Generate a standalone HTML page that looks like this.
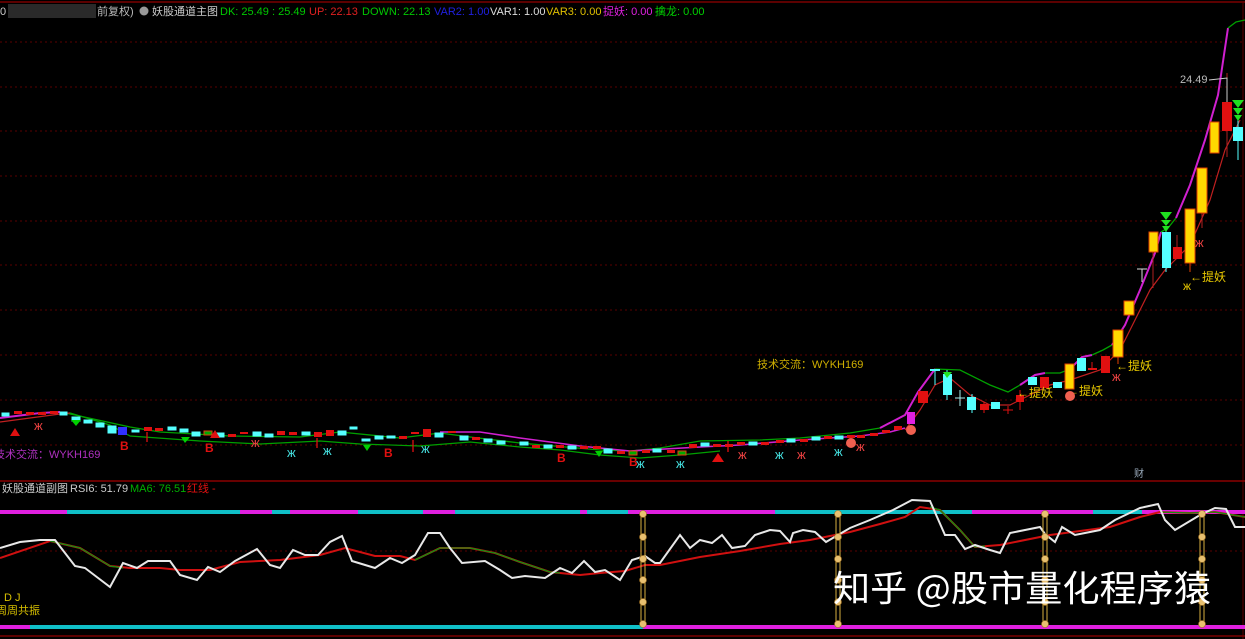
<!DOCTYPE html>
<html><head><meta charset="utf-8"><style>
html,body{margin:0;padding:0;background:#000;width:1245px;height:639px;overflow:hidden}
svg{display:block}
text{font-family:"Liberation Sans","Noto Sans CJK SC",sans-serif}
</style></head><body>
<svg width="1245" height="639" viewBox="0 0 1245 639" xmlns="http://www.w3.org/2000/svg">
<rect width="1245" height="639" fill="#000"/>
<line x1="0" y1="2" x2="1245" y2="2" stroke="#7a0000" stroke-width="1.5"/>
<line x1="1243" y1="2" x2="1243" y2="639" stroke="#5a0000"/>
<line x1="0" y1="481" x2="1245" y2="481" stroke="#8a0000" stroke-width="1.5"/>
<line x1="0" y1="636" x2="1245" y2="636" stroke="#7a0000" stroke-width="1.5"/>
<g stroke="#5a0000" stroke-dasharray="2,3">
<line x1="0" y1="42" x2="1243" y2="42"/><line x1="0" y1="87" x2="1243" y2="87"/>
<line x1="0" y1="131" x2="1243" y2="131"/><line x1="0" y1="176" x2="1243" y2="176"/>
<line x1="0" y1="221" x2="1243" y2="221"/><line x1="0" y1="265" x2="1243" y2="265"/>
<line x1="0" y1="310" x2="1243" y2="310"/><line x1="0" y1="355" x2="1243" y2="355"/>
<line x1="0" y1="400" x2="1243" y2="400"/><line x1="0" y1="445" x2="1243" y2="445"/>
<line x1="0" y1="551" x2="1243" y2="551"/>
</g>
<text x="0" y="15" font-size="11" fill="#ccc">0</text>
<rect x="8" y="4" width="88" height="14" fill="#2a2a2a"/>
<text x="97" y="15" font-size="11" fill="#bbb">前复权)</text>
<circle cx="144" cy="11" r="4.5" fill="#999"/>
<text x="152" y="15" font-size="11" fill="#ccc">妖股通道主图</text>
<text x="220" y="15" font-size="11" fill="#00c800">DK: 25.49 : 25.49</text>
<text x="309" y="15" font-size="11" fill="#e02020">UP: 22.13</text>
<text x="362" y="15" font-size="11" fill="#00c800">DOWN: 22.13</text>
<text x="434" y="15" font-size="11" fill="#2020e0">VAR2: 1.00</text>
<text x="490" y="15" font-size="11" fill="#ddd">VAR1: 1.00</text>
<text x="546" y="15" font-size="11" fill="#e0c000">VAR3: 0.00</text>
<text x="603" y="15" font-size="11" fill="#e020e0">捉妖: 0.00</text>
<text x="655" y="15" font-size="11" fill="#00d000">擒龙: 0.00</text>

<polyline fill="none" stroke="#00a000" stroke-width="1.3" points="60,412 75,415 130,427 160,432 230,436 300,437 340,432 400,438 440,433 470,437 520,443 600,450 630,451 660,448 700,441 760,440 800,438 850,433 880,428"/>
<polyline fill="none" stroke="#d020d0" stroke-width="2" points="0,418 40,413 60,412"/>
<polyline fill="none" stroke="#d020d0" stroke-width="2" points="880,428 905,415 918,392 935,369"/>
<polyline fill="none" stroke="#00a000" stroke-width="1.3" points="935,369 960,370 990,385 1008,392 1020,385"/>
<polyline fill="none" stroke="#d020d0" stroke-width="2" points="1020,385 1035,375 1045,373"/>
<polyline fill="none" stroke="#00a000" stroke-width="1.3" points="1045,373 1060,373 1070,369"/>
<polyline fill="none" stroke="#d020d0" stroke-width="2" points="1070,369 1082,357 1092,355"/>
<polyline fill="none" stroke="#00a000" stroke-width="1.3" points="1092,355 1103,350 1112,345"/>
<polyline fill="none" stroke="#d020d0" stroke-width="2" points="1112,345 1125,325 1140,290 1155,253 1161,232"/>
<polyline fill="none" stroke="#00a000" stroke-width="1.3" points="1161,232 1168,228 1176,218"/>
<polyline fill="none" stroke="#d020d0" stroke-width="2" points="1176,218 1190,185 1205,140 1218,95 1228,28"/>
<polyline fill="none" stroke="#00a000" stroke-width="1.3" points="1228,28 1236,22 1245,20"/>
<polyline fill="none" stroke="#00a000" stroke-width="1.2" points="70,413 110,425 130,436 200,441 260,444 320,441 360,444 420,446 470,442 520,447 560,450 600,455 640,458 680,455 720,451"/>
<polyline fill="none" stroke="#c02020" stroke-width="1.2" points="0,422 30,418 60,414 70,413"/>
<polyline fill="none" stroke="#d020d0" stroke-width="1.6" points="440,432 480,432 520,438 580,446 630,451 700,447 740,445 800,440 860,436 890,432 905,428"/>
<polyline fill="none" stroke="#c02020" stroke-width="1.2" points="905,430 920,410 935,385 950,378 970,395 990,405 1010,405 1030,395 1050,385 1070,380 1100,370 1120,350 1135,320 1150,290 1165,270 1190,245 1210,200 1225,150 1240,120"/>

<g stroke-width="1">
<g fill="#5ff" stroke="#5ff">
<rect x="2" y="413" width="7" height="3"/><rect x="60" y="412" width="7" height="3"/><rect x="72" y="417" width="8" height="4"/>
<rect x="84" y="420" width="8" height="3"/><rect x="96" y="423" width="8" height="4"/><rect x="108" y="426" width="8" height="7"/>
<rect x="132" y="430" width="7" height="2"/><rect x="168" y="427" width="8" height="3"/><rect x="180" y="429" width="8" height="3"/>
<rect x="192" y="432" width="8" height="4"/><rect x="216" y="433" width="8" height="4"/><rect x="253" y="432" width="8" height="4"/>
<rect x="265" y="434" width="8" height="3"/><rect x="302" y="432" width="8" height="3"/><rect x="338" y="431" width="8" height="4"/>
<rect x="350" y="427" width="7" height="2"/><rect x="362" y="439" width="8" height="2"/><rect x="375" y="436" width="8" height="3"/>
<rect x="387" y="436" width="8" height="2"/><rect x="435" y="433" width="8" height="4"/><rect x="460" y="436" width="8" height="4"/>
<rect x="484" y="439" width="8" height="3"/><rect x="497" y="441" width="8" height="3"/><rect x="520" y="442" width="8" height="3"/>
<rect x="544" y="445" width="8" height="3"/><rect x="568" y="446" width="8" height="3"/><rect x="604" y="449" width="8" height="4"/>
<rect x="653" y="449" width="8" height="3"/><rect x="701" y="443" width="8" height="3"/><rect x="749" y="442" width="8" height="3"/>
<rect x="787" y="439" width="8" height="3"/><rect x="812" y="437" width="8" height="3"/><rect x="835" y="436" width="8" height="3"/>
</g>
<g fill="#e01010">
<rect x="14" y="411" width="8" height="3"/><rect x="26" y="412" width="8" height="3"/><rect x="38" y="412" width="8" height="3"/><rect x="50" y="411" width="8" height="3"/>
<rect x="144" y="427" width="8" height="4"/><rect x="155" y="428" width="8" height="3"/><rect x="228" y="434" width="8" height="3"/>
<rect x="240" y="432" width="8" height="2"/><rect x="277" y="431" width="8" height="4"/><rect x="289" y="432" width="8" height="3"/>
<rect x="314" y="432" width="8" height="5"/><rect x="326" y="430" width="8" height="6"/><rect x="399" y="436" width="8" height="3"/>
<rect x="411" y="432" width="8" height="2"/><rect x="423" y="429" width="8" height="8"/><rect x="448" y="431" width="8" height="2"/>
<rect x="472" y="437" width="8" height="3"/><rect x="532" y="445" width="8" height="3"/><rect x="556" y="445" width="8" height="3"/>
<rect x="580" y="446" width="8" height="3"/><rect x="593" y="446" width="8" height="3"/><rect x="617" y="451" width="8" height="3"/>
<rect x="642" y="450" width="8" height="3"/><rect x="667" y="450" width="8" height="3"/><rect x="689" y="444" width="8" height="4"/>
<rect x="713" y="444" width="8" height="3"/><rect x="725" y="444" width="8" height="3"/><rect x="737" y="442" width="8" height="3"/>
<rect x="761" y="442" width="8" height="3"/><rect x="776" y="440" width="8" height="3"/><rect x="800" y="439" width="8" height="3"/>
<rect x="824" y="436" width="8" height="3"/><rect x="847" y="435" width="8" height="3"/><rect x="857" y="435" width="8" height="3"/>
<rect x="870" y="433" width="8" height="3"/><rect x="882" y="430" width="8" height="3"/><rect x="894" y="426" width="8" height="4"/>
</g>
<g fill="#0a0" stroke="#e04010"><rect x="204" y="431" width="8" height="4"/><rect x="629" y="451" width="8" height="4"/><rect x="678" y="451" width="8" height="4"/></g>
<rect x="118" y="427" width="9" height="8" fill="#3030ff"/>
</g>
<g fill="#e01010" font-size="12" font-weight="bold">
<polygon points="10,436 20,436 15,428"/><polygon points="210,438 220,438 215,430"/>
<text x="120" y="450">B</text><text x="205" y="452">B</text><text x="384" y="457">B</text>
<text x="557" y="462">B</text><text x="629" y="466">B</text>
<polygon points="712,462 724,462 718,453"/>
</g>
<g fill="#00d000"><polygon points="71,420 81,420 76,426"/><polygon points="181,437 190,437 185,443"/><polygon points="595,451 603,451 599,457"/><polygon points="363,445 371,445 367,451"/></g>
<g font-size="13" fill="#4dd">
<text x="287" y="457">ж</text><text x="323" y="455">ж</text><text x="421" y="453">ж</text><text x="636" y="468">ж</text>
<text x="676" y="468">ж</text><text x="775" y="459">ж</text><text x="834" y="456">ж</text></g>
<g font-size="13" fill="#e84040">
<text x="34" y="430">ж</text><text x="251" y="447">ж</text><text x="738" y="459">ж</text><text x="797" y="459">ж</text><text x="856" y="451">ж</text><text x="1112" y="381">ж</text><text x="1195" y="247">ж</text></g>
<g stroke="#e01010" stroke-width="1.3"><line x1="147" y1="432" x2="147" y2="442"/><line x1="317" y1="438" x2="317" y2="448"/><line x1="413" y1="440" x2="413" y2="452"/><line x1="728" y1="441" x2="728" y2="452"/></g>
<circle cx="851" cy="443" r="5" fill="#f06050"/>
<text x="-6" y="458" font-size="11" fill="#b030c0">技术交流：WYKH169</text>
<text x="757" y="368" font-size="11" fill="#d0b000">技术交流：WYKH169</text>
<text x="1134" y="477" font-size="10" fill="#9ab">财</text>

<g>
<rect x="907" y="412" width="8" height="12" fill="#e020e0"/>
<rect x="918" y="391" width="10" height="12" fill="#e01010"/>
<line x1="930" y1="370" x2="940" y2="370" stroke="#5ff" stroke-width="2"/><line x1="935" y1="370" x2="935" y2="385" stroke="#5ff"/>
<line x1="947" y1="370" x2="947" y2="400" stroke="#5ff"/><rect x="943" y="374" width="9" height="21" fill="#5ff"/>
<line x1="955" y1="398" x2="965" y2="398" stroke="#aee"/><line x1="960" y1="390" x2="960" y2="406" stroke="#aee"/>
<line x1="972" y1="394" x2="972" y2="413" stroke="#5ff"/><rect x="967" y="397" width="9" height="13" fill="#5ff"/>
<rect x="980" y="404" width="9" height="6" fill="#e01010"/><line x1="984" y1="402" x2="984" y2="413" stroke="#e01010"/>
<rect x="991" y="402" width="9" height="7" fill="#5ff"/>
<line x1="1003" y1="410" x2="1013" y2="410" stroke="#e01010"/><line x1="1008" y1="406" x2="1008" y2="414" stroke="#e01010"/>
<rect x="1016" y="395" width="8" height="7" fill="#e01010"/><line x1="1020" y1="390" x2="1020" y2="410" stroke="#e01010"/>
<rect x="1028" y="377" width="9" height="8" fill="#5ff"/>
<rect x="1040" y="377" width="9" height="11" fill="#e01010"/>
<rect x="1053" y="382" width="9" height="6" fill="#5ff"/>
<rect x="1065" y="364" width="9" height="25" fill="#ffd800" stroke="#e04000"/>
<rect x="1077" y="358" width="9" height="13" fill="#5ff"/>
<line x1="1088" y1="369" x2="1097" y2="369" stroke="#e01010" stroke-width="2"/><line x1="1092" y1="362" x2="1092" y2="369" stroke="#e01010"/>
<rect x="1101" y="356" width="9" height="17" fill="#e01010"/>
<line x1="1118" y1="357" x2="1118" y2="364" stroke="#e04000"/><rect x="1113" y="330" width="10" height="27" fill="#ffd800" stroke="#e04000"/>
<rect x="1124" y="301" width="10" height="14" fill="#ffd800" stroke="#e04000"/>
<line x1="1137" y1="269" x2="1147" y2="269" stroke="#ddd"/><line x1="1142" y1="269" x2="1142" y2="282" stroke="#ddd"/>
<line x1="1153" y1="250" x2="1153" y2="288" stroke="#b02020"/><rect x="1149" y="232" width="9" height="20" fill="#ffd800" stroke="#e04000"/>
<line x1="1166" y1="228" x2="1166" y2="272" stroke="#5ff"/><rect x="1162" y="232" width="9" height="36" fill="#5ff"/>
<line x1="1177" y1="235" x2="1177" y2="247" stroke="#b02020"/><rect x="1173" y="247" width="9" height="12" fill="#e01010"/>
<line x1="1190" y1="262" x2="1190" y2="272" stroke="#e04000"/><rect x="1185" y="209" width="10" height="54" fill="#ffd800" stroke="#e04000"/>
<line x1="1202" y1="213" x2="1202" y2="228" stroke="#b02020"/><rect x="1197" y="168" width="10" height="45" fill="#ffd800" stroke="#e04000"/>
<rect x="1210" y="122" width="9" height="31" fill="#ffd800" stroke="#e04000"/>
<line x1="1227" y1="73" x2="1227" y2="157" stroke="#b02020"/><rect x="1222" y="102" width="10" height="29" fill="#e01010"/>
<line x1="1238" y1="120" x2="1238" y2="160" stroke="#5ff"/><rect x="1233" y="127" width="10" height="14" fill="#5ff"/>
<polygon points="1232,100 1244,100 1238,108" fill="#20e020"/><polygon points="1233,108 1243,108 1238,115" fill="#20e020"/><polygon points="1234,115 1242,115 1238,121" fill="#20e020"/>
<polygon points="1160,212 1172,212 1166,220" fill="#20e020"/><polygon points="1161,220 1171,220 1166,226" fill="#20e020"/><polygon points="1162,226 1170,226 1166,232" fill="#20e020"/>
<polygon points="943,372 952,372 947,378" fill="#20e020"/>
</g>
<text x="1180" y="83" font-size="11" fill="#bbb">24.49</text>
<polyline points="1209,80 1227,78 1227,102" fill="none" stroke="#ccc" stroke-width="1"/>
<g font-size="12" fill="#e8c800">
<text x="1017" y="397">←提妖</text><text x="1067" y="395">←提妖</text><text x="1116" y="370">←提妖</text><text x="1190" y="281">←提妖</text>
<text x="1183" y="290">ж</text></g>
<circle cx="1070" cy="396" r="5" fill="#f06050"/><circle cx="911" cy="430" r="5" fill="#f06050"/>

<text x="2" y="492" font-size="11" fill="#ccc">妖股通道副图</text>
<text x="70" y="492" font-size="11" fill="#ccc">RSI6: 51.79</text>
<text x="130" y="492" font-size="11" fill="#00b000">MA6: 76.51</text>
<text x="187" y="492" font-size="11" fill="#e01010">红线 -</text>
<g stroke-width="4">
<line x1="0" y1="512" x2="67" y2="512" stroke="#e020e0"/><line x1="67" y1="512" x2="240" y2="512" stroke="#10c0c8"/>
<line x1="240" y1="512" x2="272" y2="512" stroke="#e020e0"/><line x1="272" y1="512" x2="290" y2="512" stroke="#10c0c8"/>
<line x1="290" y1="512" x2="358" y2="512" stroke="#e020e0"/><line x1="358" y1="512" x2="423" y2="512" stroke="#10c0c8"/>
<line x1="423" y1="512" x2="455" y2="512" stroke="#e020e0"/><line x1="455" y1="512" x2="580" y2="512" stroke="#10c0c8"/>
<line x1="580" y1="512" x2="587" y2="512" stroke="#e020e0"/><line x1="587" y1="512" x2="628" y2="512" stroke="#10c0c8"/>
<line x1="628" y1="512" x2="775" y2="512" stroke="#e020e0"/><line x1="775" y1="512" x2="972" y2="512" stroke="#10c0c8"/>
<line x1="972" y1="512" x2="1093" y2="512" stroke="#e020e0"/><line x1="1093" y1="512" x2="1142" y2="512" stroke="#10c0c8"/>
<line x1="1142" y1="512" x2="1245" y2="512" stroke="#e020e0"/>
<line x1="0" y1="627" x2="30" y2="627" stroke="#e020e0"/><line x1="30" y1="627" x2="643" y2="627" stroke="#10c0c8"/>
<line x1="643" y1="627" x2="1245" y2="627" stroke="#e020e0"/>
</g>
<polyline fill="none" stroke="#d01010" stroke-width="2" points="0,558 50,541 80,548 110,566 130,568 160,568 180,570 210,570 240,562 280,560 320,555 345,548 375,556 400,556 415,560 440,548 470,548 495,553 520,562 550,572 580,575 600,573 625,571 645,565 660,565 700,557 740,551 780,544 810,540 850,532 880,524 905,517 920,507 940,510 960,530 975,547 1000,545 1050,535 1080,531 1110,527 1140,517 1160,512 1190,513 1215,512 1245,517"/>
<g fill="none" stroke="#109010" stroke-width="1.3">
<polyline points="50,541 80,548 110,566 123,568"/><polyline points="415,560 440,548 470,548 495,553 520,562 550,572 560,573"/>
<polyline points="930,507 940,510 960,530 975,547 985,546"/><polyline points="1160,512 1190,513 1215,512 1245,517"/></g>
<polyline fill="none" stroke="#e8e8e8" stroke-width="2" points="0,548 20,542 40,540 55,540 75,566 85,568 110,587 123,563 137,568 148,561 170,561 180,575 197,580 208,567 220,572 235,561 257,549 270,565 280,568 293,550 305,555 318,555 330,542 342,536 352,561 375,568 390,558 402,563 415,555 428,533 440,533 450,548 462,563 485,561 500,570 512,578 525,576 545,578 560,568 572,573 584,561 595,572 605,570 620,580 632,560 645,556 655,563 660,563 680,535 690,548 700,540 712,543 722,535 732,548 745,546 755,535 770,530 780,531 790,542 793,533 803,530 815,532 826,542 838,535 850,528 870,520 893,510 912,500 930,501 945,535 955,535 965,549 975,545 990,550 1000,553 1010,533 1025,530 1040,527 1045,534 1055,542 1062,527 1075,535 1085,533 1100,530 1115,520 1140,508 1158,504 1165,520 1175,530 1200,515 1215,508 1226,509 1235,527 1245,527"/>
<g stroke="#d8b040" stroke-width="1">
<line x1="641" y1="512" x2="641" y2="627"/><line x1="645" y1="512" x2="645" y2="627"/>
<line x1="836" y1="512" x2="836" y2="627"/><line x1="840" y1="512" x2="840" y2="627"/>
<line x1="1043" y1="512" x2="1043" y2="627"/><line x1="1047" y1="512" x2="1047" y2="627"/>
<line x1="1200" y1="512" x2="1200" y2="627"/><line x1="1204" y1="512" x2="1204" y2="627"/>
</g>
<g fill="#e8c070" stroke="#a07020" stroke-width="0.6">
<circle cx="643" cy="514" r="3.5"/><circle cx="643" cy="537" r="3.5"/><circle cx="643" cy="559" r="3.5"/><circle cx="643" cy="580" r="3.5"/><circle cx="643" cy="602" r="3.5"/><circle cx="643" cy="624" r="3.5"/>
<circle cx="838" cy="514" r="3.5"/><circle cx="838" cy="537" r="3.5"/><circle cx="838" cy="559" r="3.5"/><circle cx="838" cy="580" r="3.5"/><circle cx="838" cy="602" r="3.5"/><circle cx="838" cy="624" r="3.5"/>
<circle cx="1045" cy="514" r="3.5"/><circle cx="1045" cy="537" r="3.5"/><circle cx="1045" cy="559" r="3.5"/><circle cx="1045" cy="580" r="3.5"/><circle cx="1045" cy="602" r="3.5"/><circle cx="1045" cy="624" r="3.5"/>
<circle cx="1202" cy="514" r="3.5"/><circle cx="1202" cy="537" r="3.5"/><circle cx="1202" cy="559" r="3.5"/><circle cx="1202" cy="580" r="3.5"/><circle cx="1202" cy="602" r="3.5"/><circle cx="1202" cy="624" r="3.5"/>
</g>
<text x="4" y="601" font-size="11" fill="#d8c000">D J</text>
<text x="-4" y="614" font-size="11" fill="#d8c000">周周共振</text>
<text x="833" y="601" font-size="36" fill="#fff" textLength="378" lengthAdjust="spacingAndGlyphs" style="font-family:'Noto Sans CJK SC','Liberation Sans',sans-serif">知乎 @股市量化程序猿</text>
</svg>
</body></html>
